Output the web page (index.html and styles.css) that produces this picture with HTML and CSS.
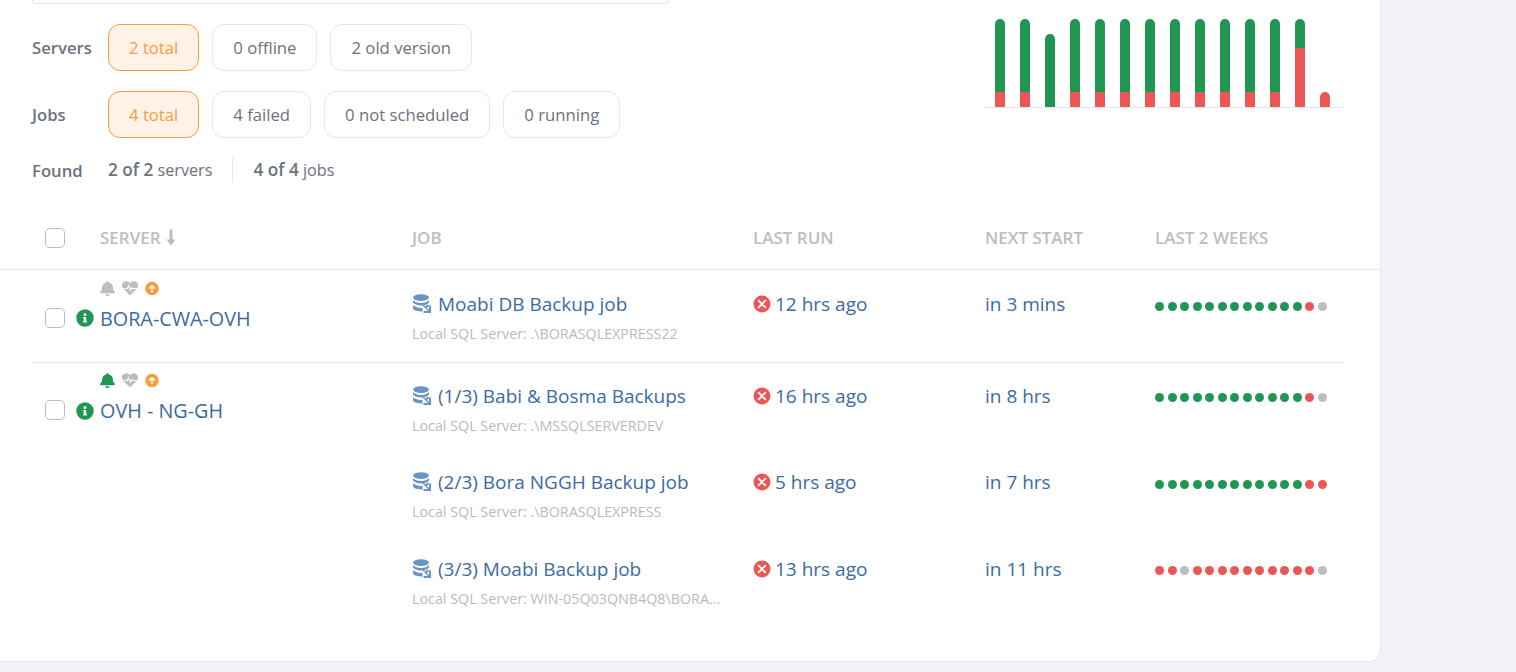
FILE: index.html
```html
<!DOCTYPE html>
<html lang="en">
<head>
  <meta charset="UTF-8" />
  <title>Servers</title>
  <link rel="stylesheet" href="styles.css">
</head>
<body>

  <svg class="icon-defs" width="0" height="0">
    <symbol id="i-bell" viewBox="0 0 448 512" preserveAspectRatio="none"><path d="M224 512c35 0 64-29 64-64H160c0 35 29 64 64 64zm215-150c-19-21-56-52-56-154 0-78-54-140-127-155V32a32 32 0 0 0-64 0v21C119 68 65 130 65 208c0 102-37 133-56 154-6 6-9 14-9 22 0 16 13 32 32 32h384c19 0 32-16 32-32 0-8-3-16-9-22z"/></symbol>
    <symbol id="i-heart" viewBox="0 0 16 15"><path d="M8 14.500 1.500 8C-.5 6-.5 3 1.200 1.400 3-.3 6-.2 8 2.200 10-.2 13-.3 14.800 1.400 16.500 3 16.500 6 14.500 8z"/><path d="M1.500 7.500h3.700l1.300-2.700 1.800 4.400 1.500-2.700.7 1h4" fill="none" stroke="#fff" stroke-width="1.100"/></symbol>
    <symbol id="i-up" viewBox="0 0 512 512"><path d="M504 256a248 248 0 1 1-496 0 248 248 0 0 1 496 0zM285 380V256h76c15 0 22-18 12-29L273 127c-9-9-25-9-34 0L139 227c-10 11-3 29 12 29h76v124c0 9 7 16 16 16h26c9 0 16-7 16-16z"/></symbol>
    <symbol id="i-info" viewBox="0 0 512 512"><path d="M256 8a248 248 0 1 0 0 496 248 248 0 0 0 0-496zm0 110a42 42 0 1 1 0 84 42 42 0 0 1 0-84zm56 254c0 7-5 12-12 12h-88c-7 0-12-5-12-12v-24c0-7 5-12 12-12h12v-64h-12c-7 0-12-5-12-12v-24c0-7 5-12 12-12h64c7 0 12 5 12 12v100h12c7 0 12 5 12 12z"/></symbol>
    <symbol id="i-fail" viewBox="0 0 18 18"><circle cx="9" cy="9" r="8.500"/><path d="M5.700 5.700l6.600 6.600M12.300 5.700l-6.600 6.600" fill="none" stroke="#fff" stroke-width="1.900" stroke-linecap="round"/></symbol>
    <symbol id="i-db" viewBox="0 0 20 20"><ellipse cx="9" cy="3.600" rx="8" ry="3.400"/><path d="M1 6c1.500 2 4.500 3 8 3s6.500-1 8-3v2.600C15.500 10.400 12.500 11.500 9 11.500S2.500 10.400 1 8.600zM1 11c1.500 1.800 4.500 2.900 8 2.900.6 0 1 0 1.500-.1v3.600c-.5.100-1 .1-1.500.1-4.400 0-8-1.500-8-3.400z"/><path d="M11.500 10.500l2 2 2.200-2.200 1.400 1.400-2.200 2.200 2.100 2.100V11.500h2v7.500h-7.500v-2h4.500l-5.900-5.900z"/></symbol>
  </svg>

  <div class="card">
    <div class="search-edge"></div>

    <div class="top">
      <div class="filters">
        <div class="filter-row">
          <span class="filter-label">Servers</span>
          <span class="pill active">2 total</span>
          <span class="pill">0 offline</span>
          <span class="pill">2 old version</span>
        </div>
        <div class="filter-row">
          <span class="filter-label">Jobs</span>
          <span class="pill active">4 total</span>
          <span class="pill">4 failed</span>
          <span class="pill">0 not scheduled</span>
          <span class="pill">0 running</span>
        </div>
        <div class="found">
          <span class="filter-label">Found</span>
          <span class="found-part"><b>2 of 2</b> servers</span>
          <span class="found-part"><b>4 of 4</b> jobs</span>
        </div>
      </div>

      <div class="chart">
        <div class="bar" style="height: 88px"><i style="height: 15px"></i></div>
        <div class="bar" style="height: 88px"><i style="height: 15px"></i></div>
        <div class="bar" style="height: 73px"></div>
        <div class="bar" style="height: 88px"><i style="height: 15px"></i></div>
        <div class="bar" style="height: 88px"><i style="height: 15px"></i></div>
        <div class="bar" style="height: 88px"><i style="height: 15px"></i></div>
        <div class="bar" style="height: 88px"><i style="height: 15px"></i></div>
        <div class="bar" style="height: 88px"><i style="height: 15px"></i></div>
        <div class="bar" style="height: 88px"><i style="height: 15px"></i></div>
        <div class="bar" style="height: 88px"><i style="height: 15px"></i></div>
        <div class="bar" style="height: 88px"><i style="height: 15px"></i></div>
        <div class="bar" style="height: 88px"><i style="height: 15px"></i></div>
        <div class="bar" style="height: 88px"><i style="height: 59px"></i></div>
        <div class="bar" style="height: 15px"><i style="height: 15px"></i></div>
      </div>
    </div>

    <div class="table-head">
      <span class="check"></span>
      <span class="head-server">SERVER <svg class="sort" viewBox="0 0 10 16"><path d="M3.500 0h3v10h3L5 16 .5 10h3z"/></svg></span>
      <span class="col-job">JOB</span>
      <span class="col-run">LAST RUN</span>
      <span class="col-next">NEXT START</span>
      <span>LAST 2 WEEKS</span>
    </div>

    <div class="group">
      <div class="server">
        <div class="status-icons">
          <svg class="ic bell grey"><use href="#i-bell"/></svg>
          <svg class="ic heart grey"><use href="#i-heart"/></svg>
          <svg class="ic up orange"><use href="#i-up"/></svg>
        </div>
        <div class="server-line">
          <span class="check"></span>
          <svg class="ic-info"><use href="#i-info"/></svg>
          <a class="server-name">BORA-CWA-OVH</a>
        </div>
      </div>
      <div class="jobs">
        <div class="job">
          <div class="col-job">
            <div class="job-title"><svg class="ic-db"><use href="#i-db"/></svg>Moabi DB Backup job</div>
            <div class="job-sub">Local SQL Server: .\BORASQLEXPRESS22</div>
          </div>
          <div class="col-run"><svg class="ic-fail"><use href="#i-fail"/></svg>12 hrs ago</div>
          <div class="col-next">in 3 mins</div>
          <div class="dots"><i class="g"></i><i class="g"></i><i class="g"></i><i class="g"></i><i class="g"></i><i class="g"></i><i class="g"></i><i class="g"></i><i class="g"></i><i class="g"></i><i class="g"></i><i class="g"></i><i class="r"></i><i class="n"></i></div>
        </div>
      </div>
    </div>

    <div class="group second">
      <div class="server">
        <div class="status-icons">
          <svg class="ic bell green"><use href="#i-bell"/></svg>
          <svg class="ic heart grey"><use href="#i-heart"/></svg>
          <svg class="ic up orange"><use href="#i-up"/></svg>
        </div>
        <div class="server-line">
          <span class="check"></span>
          <svg class="ic-info"><use href="#i-info"/></svg>
          <a class="server-name">OVH - NG-GH</a>
        </div>
      </div>
      <div class="jobs">
        <div class="job">
          <div class="col-job">
            <div class="job-title"><svg class="ic-db"><use href="#i-db"/></svg>(1/3) Babi &amp; Bosma Backups</div>
            <div class="job-sub">Local SQL Server: .\MSSQLSERVERDEV</div>
          </div>
          <div class="col-run"><svg class="ic-fail"><use href="#i-fail"/></svg>16 hrs ago</div>
          <div class="col-next">in 8 hrs</div>
          <div class="dots"><i class="g"></i><i class="g"></i><i class="g"></i><i class="g"></i><i class="g"></i><i class="g"></i><i class="g"></i><i class="g"></i><i class="g"></i><i class="g"></i><i class="g"></i><i class="g"></i><i class="r"></i><i class="n"></i></div>
        </div>
        <div class="job">
          <div class="col-job">
            <div class="job-title"><svg class="ic-db"><use href="#i-db"/></svg>(2/3) Bora NGGH Backup job</div>
            <div class="job-sub">Local SQL Server: .\BORASQLEXPRESS</div>
          </div>
          <div class="col-run"><svg class="ic-fail"><use href="#i-fail"/></svg>5 hrs ago</div>
          <div class="col-next">in 7 hrs</div>
          <div class="dots"><i class="g"></i><i class="g"></i><i class="g"></i><i class="g"></i><i class="g"></i><i class="g"></i><i class="g"></i><i class="g"></i><i class="g"></i><i class="g"></i><i class="g"></i><i class="g"></i><i class="r"></i><i class="r"></i></div>
        </div>
        <div class="job">
          <div class="col-job">
            <div class="job-title"><svg class="ic-db"><use href="#i-db"/></svg>(3/3) Moabi Backup job</div>
            <div class="job-sub">Local SQL Server: WIN-05Q03QNB4Q8\BORA...</div>
          </div>
          <div class="col-run"><svg class="ic-fail"><use href="#i-fail"/></svg>13 hrs ago</div>
          <div class="col-next">in 11 hrs</div>
          <div class="dots"><i class="r"></i><i class="r"></i><i class="n"></i><i class="r"></i><i class="r"></i><i class="r"></i><i class="r"></i><i class="r"></i><i class="r"></i><i class="r"></i><i class="r"></i><i class="r"></i><i class="r"></i><i class="n"></i></div>
        </div>
      </div>
    </div>
  </div>

</body>
</html>
```

FILE: styles.css
```css
html, body {
  margin: 0;
  height: 672px;
  overflow: hidden;
}
body {
  background: #f3f4fa;
  color: #6b7280;
  font-family: "Open Sans", "Noto Sans", sans-serif;
  font-size: 16.7px;
}
.icon-defs {
  position: absolute;
}
.card {
  box-sizing: border-box;
  width: 1381px;
  height: 662px;
  padding: 0 37px 0 32px;
  background: #fff;
  border-right: 1px solid #e4e5ec;
  border-bottom: 1px solid #e4e5ec;
  border-bottom-right-radius: 12px;
}
.search-edge {
  box-sizing: border-box;
  width: 637px;
  height: 4px;
  border: 1px solid #e4e5ec;
  border-top: 0;
  border-radius: 0 0 12px 12px;
}

/* filters + chart */
.top {
  display: flex;
  justify-content: space-between;
  align-items: flex-start;
  height: 197px;
}
.filters {
  padding-top: 20px;
}
.filter-row {
  display: flex;
  align-items: center;
  gap: 13px;
  margin-bottom: 20px;
}
.filter-label {
  flex: none;
  width: 76px;
  margin-right: -13px;
  font-weight: 600;
}
.found .filter-label {
  margin-right: 0;
  font-size: 16.7px;
}
.pill {
  box-sizing: border-box;
  height: 47px;
  padding: 0 20px;
  line-height: 45px;
  border: 1px solid #e6e7ec;
  border-radius: 12px;
}
.pill.active {
  color: #ff9a3d;
  background: #fff3e8;
  border-color: #ff9a3d;
}
.found {
  display: flex;
  align-items: center;
  height: 26px;
  margin-top: -1px;
  font-size: 16.2px;
}
.found-part {
  padding-right: 20px;
  line-height: 24px;
}
.found-part + .found-part {
  padding-left: 20px;
  border-left: 1px solid #e6e7ec;
}
.found-part b {
  font-size: 17.2px;
  font-weight: 600;
}
.chart {
  display: flex;
  align-items: flex-end;
  gap: 15px;
  box-sizing: border-box;
  width: 360px;
  height: 104px;
  padding: 0 12px;
  border-bottom: 1px solid #e6e6e6;
}
.bar {
  display: flex;
  align-items: flex-end;
  width: 10px;
  overflow: hidden;
  background: #219653;
  border-radius: 5px 5px 0 0;
}
.bar i {
  display: block;
  width: 100%;
  background: #eb5757;
}

/* table */
.table-head {
  display: flex;
  align-items: center;
  box-sizing: border-box;
  height: 69px;
  margin: 0 -37px 0 -32px;
  padding: 5px 37px 0 45px;
  color: #bdbdbd;
  font-size: 17px;
  font-weight: 600;
  border-bottom: 1px solid #e6e6e6;
}
.head-server {
  display: flex;
  align-items: center;
  gap: 5px;
  width: 312px;
  margin-left: 35px;
}
.sort {
  width: 10px;
  height: 17px;
  fill: #bdbdbd;
}
.col-job {
  width: 341px;
}
.col-run {
  width: 232px;
}
.col-next {
  width: 170px;
}
.check {
  display: inline-block;
  box-sizing: border-box;
  flex: none;
  width: 20px;
  height: 20px;
  background: #fff;
  border: 1px solid #b7bcc6;
  border-radius: 5px;
}
.group {
  display: flex;
  box-sizing: border-box;
  height: 93px;
  border-bottom: 1px solid #e6e6e6;
}
.group.second {
  height: auto;
  margin-top: -1.3px;
  border-bottom: 0;
}
.server {
  width: 380px;
  padding-top: 10px;
}
.second .server {
  padding-top: 11px;
}
.status-icons {
  display: flex;
  align-items: center;
  gap: 7px;
  height: 16px;
  padding-left: 68px;
}
.ic {
  height: 15px;
}
.ic.bell {
  width: 15px;
}
.ic.heart {
  width: 16px;
}
.ic.up {
  width: 14px;
}
.grey {
  fill: #bdbdbd;
}
.green {
  fill: #219653;
}
.orange {
  fill: #ff9a3d;
}
.server-line {
  display: flex;
  align-items: center;
  height: 26px;
  margin-top: 9px;
  padding-left: 13px;
}
.server-line .check {
  margin-top: -1px;
}
.ic-info {
  width: 18px;
  height: 18px;
  margin: 0 6px 0 11px;
  fill: #219653;
}
.server-name {
  color: #3b6ba5;
  font-size: 19.8px;
}
.jobs {
  flex: 1;
}
.job {
  display: flex;
  box-sizing: border-box;
  height: 86.5px;
  padding-top: 20px;
  color: #3b6ba5;
  font-size: 19px;
}
.job-title {
  display: flex;
  align-items: center;
  height: 28px;
}
.job .col-run, .job .col-next {
  display: flex;
  align-items: center;
  height: 28px;
}
.ic-db {
  width: 20px;
  height: 20px;
  margin-right: 6px;
  fill: #6a94c4;
}
.job-sub {
  margin-top: 6px;
  color: #b8bbc2;
  font-size: 14.3px;
}
.ic-fail {
  width: 18px;
  height: 18px;
  margin-right: 4px;
  fill: #eb5757;
}
.dots {
  display: flex;
  align-items: center;
  gap: 3.5px;
  box-sizing: border-box;
  height: 28px;
  padding-top: 4px;
}
.dots i {
  display: block;
  width: 9px;
  height: 9px;
  border-radius: 50%;
}
.dots .g {
  background: #219653;
}
.dots .r {
  background: #eb5757;
}
.dots .n {
  background: #bdbdbd;
}
```
